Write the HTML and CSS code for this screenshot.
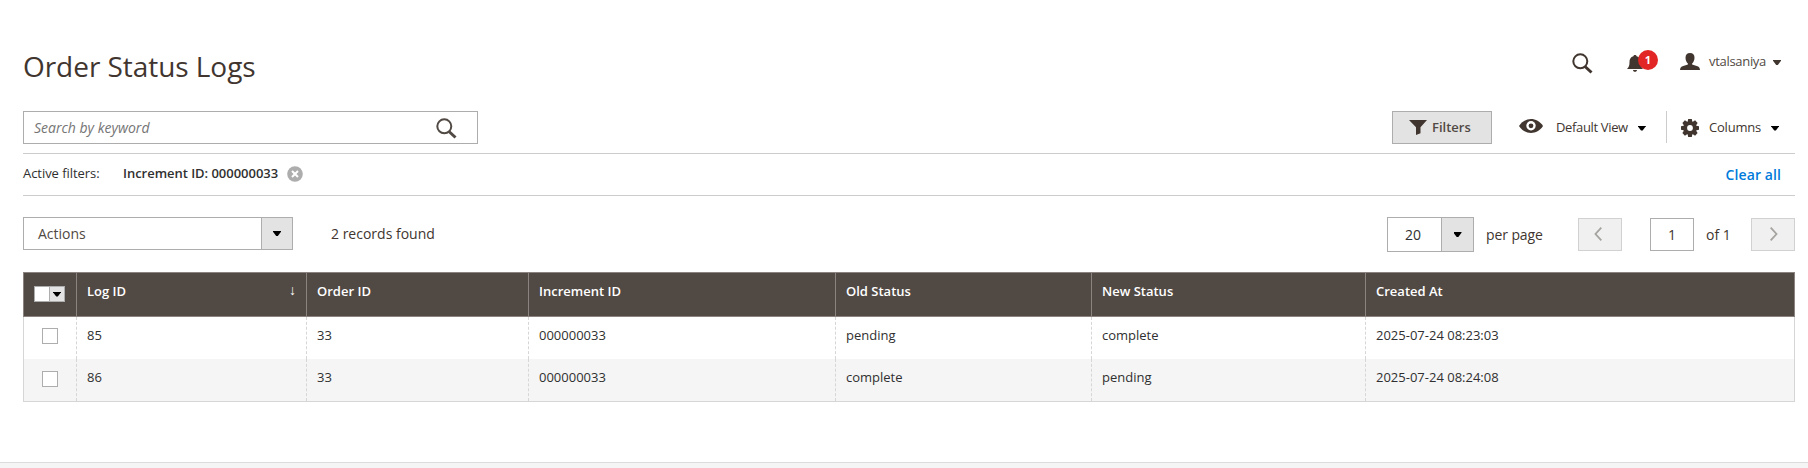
FILE: index.html
```html
<!DOCTYPE html>
<html lang="en">
<head>
<meta charset="utf-8">
<title>Order Status Logs</title>
<link rel="stylesheet" href="styles.css">
</head>
<body>
<main class="page">
  <header class="header">
    <h1 class="title">Order Status Logs</h1>
    <div class="header-tools">
      <svg class="icon-search" viewBox="0 0 21 21"><circle cx="8.3" cy="8.3" r="7" fill="none" stroke="#41362f" stroke-width="2"/><path d="M13 13.500l6.500 6" stroke="#41362f" stroke-width="3"/></svg>
      <div class="bell">
        <svg width="16" height="17" viewBox="0 0 16 17" fill="#41362f"><path d="M8 0c1 0 1.600.6 1.600 1.300C12.500 2 13.500 4.500 13.500 7c0 3.500.5 5 2.500 7H0c2-2 2.500-3.500 2.500-7 0-2.500 1-5 3.900-5.700C6.400.6 7 0 8 0zM6 15h4c0 1-.8 1.800-2 1.800S6 16 6 15z"/></svg>
        <span class="badge">1</span>
      </div>
      <svg class="user-icon" width="20" height="17" viewBox="0 0 20 17" fill="#41362f"><path d="M10 0c3 0 4.500 1.900 4.500 4.700 0 2.500-1 4.600-2.400 5.700v1.200l5.400 1.700c1.500.5 2.300 1.700 2.500 3.700H0c.2-2 1-3.200 2.500-3.700l5.400-1.700v-1.200C6.500 9.300 5.500 7.200 5.500 4.700 5.500 1.900 7 0 10 0z"/></svg>
      <span class="user-name">vtalsaniya</span>
      <i class="caret caret-brown"></i>
    </div>
  </header>

  <section class="toolbar">
    <div class="search">
      <span class="placeholder">Search by keyword</span>
      <svg class="icon-search" viewBox="0 0 21 21"><circle cx="8.300" cy="8.300" r="7" fill="none" stroke="#514943" stroke-width="2"/><path d="M13 13.500l6.500 6" stroke="#514943" stroke-width="3"/></svg>
    </div>
    <div class="toolbar-right">
      <button class="filters"><svg width="18" height="15" viewBox="0 0 18 15" fill="#41362f"><path d="M0 0h18l-6.500 7.200v6L7 15V7.200z"/></svg>Filters</button>
      <div class="view">
        <svg width="24" height="14" viewBox="0 0 24 14"><path d="M0 7C6-2.300 18-2.300 24 7 18 16.300 6 16.300 0 7z" fill="#41362f"/><circle cx="12" cy="6.800" r="4.700" fill="#fff"/><circle cx="12" cy="6.800" r="2.400" fill="#41362f"/></svg>
        <span>Default View</span><i class="caret"></i>
      </div>
      <div class="columns">
        <svg width="18" height="18" viewBox="-9 -9 18 18"><g fill="#41362f"><circle r="6.700"/><path id="t" d="M-1.800-9h3.600l.7 3.500h-5zM-1.800 9h3.600l.7-3.500h-5z"/><use href="#t" transform="rotate(45)"/><use href="#t" transform="rotate(90)"/><use href="#t" transform="rotate(135)"/></g><circle r="2.900" fill="#fff"/></svg>
        <span>Columns</span><i class="caret"></i>
      </div>
    </div>
  </section>

  <section class="active-filters">
    <span class="label">Active filters:</span>
    <span class="filter">Increment ID: 000000033</span>
    <svg width="16" height="16" viewBox="0 0 16 16"><circle cx="8" cy="8" r="7.800" fill="#adadad"/><path d="M5 5l6 6M11 5l-6 6" stroke="#fff" stroke-width="2"/></svg>
    <a class="clear">Clear all</a>
  </section>

  <section class="controls">
    <div class="select actions"><span>Actions</span><b><i class="caret"></i></b></div>
    <span class="records">2 records found</span>
    <div class="pager">
      <div class="select size"><span>20</span><b><i class="caret"></i></b></div>
      <span class="per-page">per page</span>
      <button class="page-btn"><svg width="8" height="14" viewBox="0 0 8 14"><path d="M7.300.7L1.500 7l5.800 6.300" fill="none" stroke="#a5a39f" stroke-width="1.800"/></svg></button>
      <span class="page-input">1</span>
      <span class="of">of 1</span>
      <button class="page-btn next"><svg width="8" height="14" viewBox="0 0 8 14"><path d="M.7.7L6.500 7 .7 13.300" fill="none" stroke="#a5a39f" stroke-width="1.800"/></svg></button>
    </div>
  </section>

  <div class="grid">
    <div class="row head">
      <div class="check-all"><span class="multi"><i class="box"></i><b><i class="caret"></i></b></span></div>
      <div class="sorted">Log ID<span class="arrow">↓</span></div><div>Order ID</div><div>Increment ID</div><div>Old Status</div><div>New Status</div><div>Created At</div>
    </div>
    <div class="row">
      <div class="check"><i class="checkbox"></i></div>
      <div>85</div><div>33</div><div>000000033</div><div>pending</div><div>complete</div><div>2025-07-24 08:23:03</div>
    </div>
    <div class="row even">
      <div class="check"><i class="checkbox"></i></div>
      <div>86</div><div>33</div><div>000000033</div><div>complete</div><div>pending</div><div>2025-07-24 08:24:08</div>
    </div>
  </div>
</main>
<footer class="footer"></footer>
</body>
</html>
```
FILE: styles.css
```css
* { box-sizing: border-box; }
html, body { height: 100%; }
body {
  margin: 0;
  display: flex;
  flex-direction: column;
  overflow: hidden;
  background: #fff;
  color: #303030;
  font: 13px/18px "Open Sans", sans-serif;
}
svg { display: block; flex: none; }
button { font: inherit; padding: 0; border-radius: 0; }

.page { flex: none; height: 462px; padding: 0 13px 0 23px; }
.footer { flex: 1; border-top: 1px solid #dcdcdc; background: #f5f5f5; }

.caret {
  flex: none;
  width: 8px;
  height: 5px;
  background: #000;
  clip-path: polygon(0 0, 100% 0, 100% 15%, 60% 100%, 40% 100%, 0 15%);
}
.caret-brown { background: #41362f; }
.icon-search { width: 21px; height: 21px; }

.header { display: flex; justify-content: space-between; height: 111px; padding-top: 47px; }
.title { margin: 0; color: #41362f; font-size: 28px; font-weight: 400; line-height: 38px; letter-spacing: -.05px; }
.header-tools { display: flex; align-items: flex-start; padding: 6px 14px 0 0; }
.bell { position: relative; margin: 2px 0 0 34px; width: 53px; }
.badge {
  position: absolute;
  left: 11px;
  top: -5px;
  width: 20px;
  height: 20px;
  border-radius: 50%;
  background: #e22626;
  color: #fff;
  font-size: 11px;
  font-weight: 700;
  line-height: 20px;
  text-align: center;
}
.user-name { margin: -1px 7px 0 9px; color: #514943; letter-spacing: -.3px; }
.header-tools .caret { margin-top: 7px; }

.toolbar { display: flex; justify-content: space-between; height: 43px; border-bottom: 1px solid #ccc; }
.search {
  display: flex;
  justify-content: space-between;
  width: 455px;
  height: 33px;
  padding: 6px 20px 0 10px;
  border: 1px solid #adadad;
}
.placeholder { color: #757575; font-size: 14px; font-style: italic; line-height: 20px; }
.toolbar-right { display: flex; height: 33px; color: #41362f; }
.filters {
  display: flex;
  align-items: center;
  gap: 5px;
  width: 100px;
  height: 33px;
  padding: 0 0 1px 16px;
  border: 1px solid #adadad;
  background: #e3e3e3;
  color: #514943;
  font-weight: 600;
}
.view, .columns { display: flex; align-items: center; height: 32px; color: #41362f; }
.view { width: 174px; padding-left: 27px; }
.view span { letter-spacing: -.35px; }
.view svg { margin: -2px 13px 0 0; }
.view .caret { margin: 2px 0 0 10px; }
.columns { width: 129px; padding-left: 14px; border-left: 1px solid #ccc; }
.columns span { letter-spacing: -.2px; }
.columns svg { margin: 2px 10px 0 0; }
.columns .caret { margin: 2px 0 0 10px; }

.active-filters { display: flex; height: 42px; padding: 10px 14px 0 0; border-bottom: 1px solid #ccc; }
.label { width: 100px; letter-spacing: -.05px; }
.filter { margin-right: 9px; font-weight: 600; letter-spacing: -.03px; }
.active-filters svg { margin-top: 2px; }
.clear { margin-left: auto; padding-top: 2px; color: #007bdb; font-size: 14px; font-weight: 600; letter-spacing: .1px; }

.controls { display: flex; height: 76px; padding-top: 21px; color: #41362f; font-size: 14px; line-height: 20px; }
.select { display: flex; border: 1px solid #adadad; }
.select span { flex: 1; padding-top: 6px; }
.select b { display: flex; align-items: center; justify-content: center; border-left: 1px solid #adadad; background: #e3e3e3; }
.actions { width: 270px; height: 33px; color: #514943; }
.actions span { padding-left: 14px; }
.actions b { width: 31px; }
.records { margin-left: 38px; padding-top: 7px; }
.pager { display: flex; margin-left: auto; }
.size { width: 87px; height: 35px; color: #303030; }
.select.size span { padding: 7px 3px 0 0; text-align: center; }
.size b { width: 32px; }
.per-page { width: 104px; padding: 8px 0 0 12px; letter-spacing: -.1px; }
.page-btn, .page-input { width: 44px; height: 33px; margin-top: 1px; }
.page-btn { display: flex; align-items: center; justify-content: center; padding: 0 4px 2px 0; border: 1px solid #d1d1d1; background: #f0f0f0; }
.page-btn.next { padding: 0 0 2px 1px; }
.page-input { margin-left: 28px; padding-top: 6px; border: 1px solid #adadad; text-align: center; }
.of { width: 57px; padding: 8px 0 0 12px; }

.grid { width: 1772px; border: 1px solid #d6d6d6; border-top: 0; }
.row { display: grid; grid-template-columns: 53px 230px 222px 307px 256px 274px 428px; height: 42px; }
.row > div { padding: 9px 10px 0; border-right: 1px dashed #d6d6d6; }
.row > div:last-child { border-right: 0; }
.even { background: #f5f5f5; }
.head {
  height: 45px;
  margin: 0 -1px;
  border: 1px solid #8a837f;
  background: #514943;
  color: #fff;
  font-weight: 600;
}
.head > div { border-right: 1px solid #8a837f; }
.head .sorted { display: flex; justify-content: space-between; }
.arrow { font-size: 14px; line-height: 16px; font-weight: 400; }
.row > .check-all { padding: 13px 0 0 10px; }
.multi { display: flex; width: 31px; height: 16px; border: 1px solid #adadad; background: #fff; }
.box { width: 14px; }
.multi b { display: flex; flex: 1; align-items: center; justify-content: center; border-left: 1px solid #adadad; background: #e3e3e3; }
.row > .check { padding: 11px 0 0 18px; }
.checkbox { display: block; width: 16px; height: 16px; border: 1px solid #adadad; background: #fff; }
.even .checkbox { margin-top: 1px; }
```
